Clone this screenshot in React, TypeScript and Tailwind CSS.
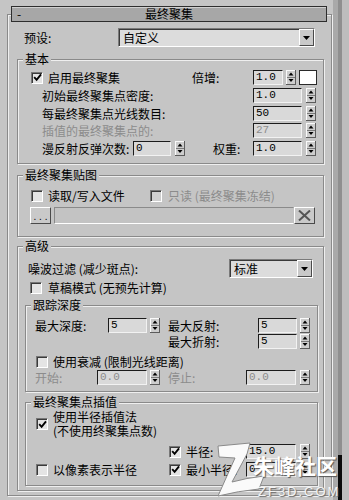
import React from "react";

const cjk = "font-['Noto_Sans_CJK_SC','Noto_Sans',sans-serif]";
const mono = "font-['Liberation_Mono',monospace]";

function Spinner({ className = "" }: { className?: string }) {
  return (
    <svg width="10" height="15" viewBox="0 0 10 15" className={`block shrink-0 ${className}`}>
      <rect width="10" height="15" fill="#cdcdcd" />
      <rect width="10" height="1" fill="#fafafa" />
      <rect width="1" height="15" fill="#fafafa" />
      <rect x="9" width="1" height="15" fill="#5c5c5c" />
      <rect y="14" width="10" height="1" fill="#5c5c5c" />
      <rect x="1" y="7" width="8" height="1" fill="#7a7a7a" />
      <polygon points="2.5,5.5 7.5,5.5 5,2.5" fill="#000" />
      <polygon points="2.5,9 7.5,9 5,12" fill="#000" />
    </svg>
  );
}

function Field({ w, value, disabled }: { w: string; value: string; disabled?: boolean }) {
  return (
    <div
      className={`${w} h-[15px] shrink-0 flex items-center pl-[2px] bg-[#d9d9d9] border border-t-[#1c1c1c] border-l-[#1c1c1c] border-b-[#f2f2f2] border-r-[#f2f2f2] ${mono} text-[11px] leading-none ${
        disabled ? "text-[#8c8c8c]" : "text-black"
      }`}
    >
      {value}
    </div>
  );
}

function Check({ checked, disabled }: { checked?: boolean; disabled?: boolean }) {
  return (
    <div
      className={`w-[12px] h-[12px] shrink-0 border border-t-[#777] border-l-[#777] border-b-white border-r-white shadow-[inset_1px_1px_0_#3a3a3a] ${
        disabled ? "bg-[#cfcfcf]" : "bg-[#e4e4e4]"
      } flex items-center justify-center`}
    >
      {checked && (
        <svg width="9" height="9" viewBox="0 0 9 9" className="block">
          <path d="M1.2 4.2 L3.6 6.8 L8 1.4" stroke="#000" strokeWidth="1.9" fill="none" />
        </svg>
      )}
    </div>
  );
}

function Dropdown({ w, text }: { w: string; text: string }) {
  return (
    <div
      className={`${w} h-[19px] shrink-0 flex items-center border border-t-[#7a7a7a] border-l-[#7a7a7a] border-b-white border-r-white`}
    >
      <div className="flex-1 h-full flex items-center bg-[#dcdcdc] shadow-[inset_1px_1px_0_#3a3a3a] pl-[4px] text-[12px] leading-none">
        {text}
      </div>
      <div className="w-[15px] h-[17px] shrink-0 bg-[#c9c9c9] border border-t-white border-l-white border-b-[#4a4a4a] border-r-[#4a4a4a] flex items-center justify-center">
        <svg width="7" height="4" viewBox="0 0 7 4" className="block">
          <polygon points="0,0 7,0 3.5,4" fill="#000" />
        </svg>
      </div>
    </div>
  );
}

function Group({
  label,
  className = "",
  children,
}: {
  label: string;
  className?: string;
  children: React.ReactNode;
}) {
  return (
    <div
      className={`relative border border-[#8a8a8a] shadow-[inset_1px_1px_0_#efefef,1px_1px_0_#efefef] ${className}`}
    >
      <div className="absolute -top-[9px] left-[5px] px-[2px] bg-[#c5c5c5] text-[12px] leading-[16px]">
        {label}
      </div>
      {children}
    </div>
  );
}

export default function App() {
  return (
    <div className={`w-[349px] h-[500px] bg-[#c5c5c5] flex overflow-hidden relative ${cjk} text-[12px] text-black`}>
      <div className="w-[333px] shrink-0 pt-[14px] pl-[7px]">
        <div className="w-[325px] border border-[#8a8a8a] shadow-[inset_1px_1px_0_#efefef,1px_1px_0_#efefef] pb-[4px]">
          {/* title bar */}
          <div className="-mt-[9px] ml-[3px] w-[316px] h-[16px] bg-[#a7a7a7] border border-[#2e2e2e] shadow-[inset_0_1px_0_#d0d0d0] grid grid-cols-[20px_1fr_20px] items-center text-[12px] leading-none">
            <span className="pl-[5px]">-</span>
            <span className="text-center">最终聚集</span>
            <span />
          </div>

          {/* preset */}
          <div className="mt-[6px] flex items-center">
            <div className="pl-[16px] w-[110px] shrink-0 leading-[15px]">预设:</div>
            <Dropdown w="w-[197px]" text="自定义" />
          </div>

          {/* 基本 */}
          <Group label="基本" className="ml-[9px] mt-[12px] w-[307px] pt-[10px] pb-[7px]">
            <div className="h-[15px] flex items-center pl-[13px]">
              <Check checked />
              <div className="ml-[5px] w-[144px] leading-[15px]">启用最终聚集</div>
              <div className="w-[61px] leading-[15px]">倍增:</div>
              <Field w="w-[30px]" value="1.0" />
              <Spinner className="ml-[3px]" />
              <div className="ml-[3px] w-[18px] h-[15px] bg-white border border-[#2a2a2a]" />
            </div>
            <div className="mt-[3px] h-[15px] flex items-center pl-[24px]">
              <div className="w-[211px] leading-[15px]">初始最终聚集点密度:</div>
              <Field w="w-[49px]" value="1.0" />
              <Spinner className="ml-[4px]" />
            </div>
            <div className="mt-[3px] h-[15px] flex items-center pl-[24px]">
              <div className="w-[211px] leading-[15px]">每最终聚集点光线数目:</div>
              <Field w="w-[49px]" value="50" />
              <Spinner className="ml-[4px]" />
            </div>
            <div className="mt-[2px] h-[15px] flex items-center pl-[24px]">
              <div className="w-[211px] leading-[15px] text-[#8c8c8c]">插值的最终聚集点的:</div>
              <Field w="w-[49px]" value="27" disabled />
              <Spinner className="ml-[4px]" />
            </div>
            <div className="mt-[3px] h-[15px] flex items-center pl-[24px]">
              <div className="w-[91px] leading-[15px]">漫反射反弹次数:</div>
              <Field w="w-[38px]" value="0" />
              <Spinner className="ml-[4px]" />
              <div className="ml-[28px] w-[40px] leading-[15px]">权重:</div>
              <Field w="w-[49px]" value="1.0" />
              <Spinner className="ml-[4px]" />
            </div>
          </Group>

          {/* 最终聚集贴图 */}
          <Group label="最终聚集贴图" className="ml-[9px] mt-[11px] w-[307px] pt-[13px] pb-[12px]">
            <div className="h-[14px] flex items-center pl-[13px]">
              <Check />
              <div className="ml-[5px] w-[102px] leading-[14px]">读取/写入文件</div>
              <Check disabled />
              <div className="ml-[6px] leading-[14px] text-[#8c8c8c]">只读 (最终聚集冻结)</div>
            </div>
            <div className="mt-[4px] h-[17px] flex items-stretch pl-[12px]">
              <div className="w-[21px] shrink-0 bg-[#c9c9c9] border border-t-white border-l-white border-b-[#4a4a4a] border-r-[#4a4a4a] flex items-end justify-center pb-[1px] font-['Liberation_Sans',sans-serif] text-[10px] leading-none">
                . . .
              </div>
              <div className="ml-[3px] w-[240px] shrink-0 bg-[#c3c3c3] border border-t-[#8a8a8a] border-l-[#8a8a8a] border-b-white border-r-transparent" />
              <div className="w-[21px] shrink-0 bg-[#c9c9c9] border border-t-white border-l-white border-b-[#4a4a4a] border-r-[#4a4a4a] flex items-center justify-center">
                <svg width="13" height="11" viewBox="0 0 13 11" className="block">
                  <path d="M1 0.5 L12 10.5 M12 0.5 L1 10.5" stroke="#555" strokeWidth="2" />
                </svg>
              </div>
            </div>
          </Group>

          {/* 高级 */}
          <Group label="高级" className="ml-[9px] mt-[9px] w-[307px] pt-[12px] pb-[4px]">
            <div className="h-[19px] flex items-center pl-[10px]">
              <div className="w-[201px] leading-[15px]">噪波过滤 (减少斑点):</div>
              <Dropdown w="w-[84px]" text="标准" />
            </div>
            <div className="mt-[4px] h-[12px] flex items-center pl-[12px]">
              <Check />
              <div className="ml-[6px] leading-[14px]">草稿模式 (无预先计算)</div>
            </div>

            {/* 跟踪深度 */}
            <Group label="跟踪深度" className="ml-[7px] mt-[11px] w-[293px] pt-[12px] pb-[6px]">
              <div className="h-[15px] flex items-center pl-[9px]">
                <div className="w-[73px] leading-[15px]">最大深度:</div>
                <Field w="w-[39px]" value="5" />
                <Spinner className="ml-[3px]" />
                <div className="ml-[8px] w-[90px] leading-[15px]">最大反射:</div>
                <Field w="w-[39px]" value="5" />
                <Spinner className="ml-[3px]" />
              </div>
              <div className="mt-[1px] h-[15px] flex items-center pl-[142px]">
                <div className="w-[90px] leading-[15px]">最大折射:</div>
                <Field w="w-[39px]" value="5" />
                <Spinner className="ml-[3px]" />
              </div>
              <div className="mt-[7px] h-[12px] flex items-center pl-[10px]">
                <Check />
                <div className="ml-[5px] leading-[14px]">使用衰减 (限制光线距离)</div>
              </div>
              <div className="mt-[2px] h-[15px] flex items-center pl-[9px]">
                <div className="w-[62px] leading-[15px] text-[#8c8c8c]">开始:</div>
                <Field w="w-[50px]" value="0.0" disabled />
                <Spinner className="ml-[3px]" />
                <div className="ml-[8px] w-[78px] leading-[15px] text-[#8c8c8c]">停止:</div>
                <Field w="w-[50px]" value="0.0" disabled />
                <Spinner className="ml-[4px]" />
              </div>
            </Group>

            {/* 最终聚集点插值 */}
            <Group label="最终聚集点插值" className="ml-[7px] mt-[10px] w-[293px] pt-[7px] pb-[8px]">
              <div className="h-[28px] flex items-center pl-[10px]">
                <Check checked />
                <div className="ml-[5px] leading-[14px]">
                  <div>使用半径插值法</div>
                  <div>(不使用终聚集点数)</div>
                </div>
              </div>
              <div className="mt-[6px] h-[15px] flex items-center pl-[143px]">
                <Check checked />
                <div className="ml-[5px] w-[60px] leading-[15px]">半径:</div>
                <Field w="w-[50px]" value="15.0" />
                <Spinner className="ml-[4px]" />
              </div>
              <div className="mt-[3px] h-[15px] flex items-center pl-[10px]">
                <Check />
                <div className="ml-[5px] w-[116px] leading-[15px]">以像素表示半径</div>
                <Check checked />
                <div className="ml-[5px] w-[60px] leading-[15px]">最小半径:</div>
                <Field w="w-[50px]" value="0.1" />
                <Spinner className="ml-[4px]" />
              </div>
            </Group>
          </Group>
        </div>
      </div>

      {/* right strips */}
      <div className="w-[5px] shrink-0 bg-[#a9a9a9]" />
      <div className="w-[4px] shrink-0 bg-[#8f8f8f] flex flex-col justify-end">
        <div className="h-[45px] bg-[#0a0a0a]" />
      </div>
      <div className="flex-1 bg-[#bdbdbd]" />

      {/* watermark */}
      <svg width="60" height="62" viewBox="0 0 60 62" className="absolute left-[210px] top-[438px]">
        <path
          d="M8 8 L40 5 L37 16 L22 44 Q36 40 54 38 L49 51 Q28 53 8 58 L25 20 L9 19 Z"
          fill="#fafafa"
          stroke="#8a8a8a"
          strokeWidth="1"
        />
      </svg>
      <div className="absolute left-[253px] top-[452px] text-[21px] leading-[26px] text-white font-bold [text-shadow:1px_1px_1px_#555]">
        朱峰社区
      </div>
      <div className="absolute left-[258px] top-[484px] font-['Liberation_Sans',sans-serif] text-[13px] leading-[15px] tracking-[2px] text-[#f4f4f4] [text-shadow:1px_1px_1px_#666]">
        ZF3D.COM
      </div>
    </div>
  );
}
